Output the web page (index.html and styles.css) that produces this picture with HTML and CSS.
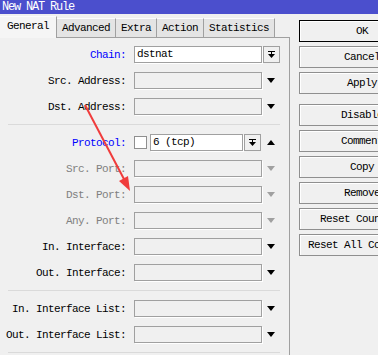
FILE: index.html
```html
<!DOCTYPE html>
<html lang="en">
<head>
    <meta charset="UTF-8">
    <title>New NAT Rule</title>
    <link rel="stylesheet" href="styles.css">
</head>
<body>
    <div class="titlebar">New NAT Rule</div>

    <div class="window">
        <div class="left">
            <div class="tabs">
                <div class="tab selected">General</div>
                <div class="tab">Advanced</div>
                <div class="tab">Extra</div>
                <div class="tab">Action</div>
                <div class="tab">Statistics</div>
            </div>

            <div class="panel">
                <div class="row">
                    <label class="label blue">Chain:</label>
                    <div class="field white chain">dstnat</div>
                    <div class="combo-btn">
                        <svg width="7" height="8" viewBox="0 0 7 8"><rect x="0" y="0" width="7" height="1" fill="#000"/><rect x="3" y="1" width="1" height="3" fill="#000"/><polygon points="0,3 7,3 3.5,7" fill="#000"/></svg>
                    </div>
                </div>
                <div class="row">
                    <label class="label">Src. Address:</label>
                    <div class="field"></div>
                    <div class="arrow down"></div>
                </div>
                <div class="row">
                    <label class="label">Dst. Address:</label>
                    <div class="field"></div>
                    <div class="arrow down"></div>
                </div>

                <div class="separator"></div>

                <div class="row">
                    <label class="label blue">Protocol:</label>
                    <div class="checkbox"></div>
                    <div class="field white proto">6 (tcp)</div>
                    <div class="combo-btn">
                        <svg width="7" height="8" viewBox="0 0 7 8"><rect x="0" y="0" width="7" height="1" fill="#000"/><rect x="3" y="1" width="1" height="3" fill="#000"/><polygon points="0,3 7,3 3.5,7" fill="#000"/></svg>
                    </div>
                    <div class="arrow up"></div>
                </div>
                <div class="row">
                    <label class="label disabled">Src. Port:</label>
                    <div class="field"></div>
                    <div class="arrow down dim"></div>
                </div>
                <div class="row">
                    <label class="label disabled">Dst. Port:</label>
                    <div class="field"></div>
                    <div class="arrow down dim"></div>
                </div>
                <div class="row">
                    <label class="label disabled">Any. Port:</label>
                    <div class="field"></div>
                    <div class="arrow down dim"></div>
                </div>
                <div class="row">
                    <label class="label">In. Interface:</label>
                    <div class="field"></div>
                    <div class="arrow down"></div>
                </div>
                <div class="row">
                    <label class="label">Out. Interface:</label>
                    <div class="field"></div>
                    <div class="arrow down"></div>
                </div>

                <div class="separator"></div>

                <div class="row">
                    <label class="label">In. Interface List:</label>
                    <div class="field"></div>
                    <div class="arrow down"></div>
                </div>
                <div class="row">
                    <label class="label">Out. Interface List:</label>
                    <div class="field"></div>
                    <div class="arrow down"></div>
                </div>

                <div class="separator"></div>
            </div>
        </div>

        <div class="buttons">
            <button class="default">OK</button>
            <button>Cancel</button>
            <button>Apply</button>
            <button class="spaced">Disable</button>
            <button>Comment</button>
            <button>Copy</button>
            <button>Remove</button>
            <button>Reset Counters</button>
            <button>Reset All Counters</button>
        </div>
    </div>

    <!-- annotation arrow drawn over the form -->
    <svg class="annotation" width="378" height="355" viewBox="0 0 378 355">
        <line x1="85" y1="105" x2="125" y2="181" stroke="#f03c3c" stroke-width="2"/>
        <polygon points="130,191 119,181 128,176" fill="#f03c3c"/>
    </svg>
</body>
</html>
```

FILE: styles.css
```css
body {
    margin: 0;
    padding: 0;
    width: 378px;
    height: 355px;
    overflow: hidden;
    background-color: #f0f0f0;
    font-family: "Liberation Mono", monospace;
    font-size: 11px;
    letter-spacing: -0.6px;
    color: #000;
    position: relative;
}

.titlebar {
    height: 14px;
    line-height: 14px;
    padding-left: 2px;
    font-size: 12px;
    letter-spacing: -1.2px;
    background-color: #4b4fcd;
    color: #fff;
}

.window {
    display: flex;
}

.left {
    width: 290px;
    flex-shrink: 0;
}

.tabs {
    display: flex;
    align-items: flex-end;
    height: 23px;
}

.tab {
    height: 19px;
    line-height: 19px;
    padding: 0 5px;
    background-color: #e4e4e4;
    border-top: 1px solid #fcfcfc;
    border-right: 1px solid #a0a0a0;
    box-sizing: border-box;
}

.tab.selected {
    height: 22px;
    line-height: 18px;
    padding: 0 7px;
    background-color: #f5f5f5;
    margin-bottom: -1px;
    position: relative;
}

.panel {
    border-top: 1px solid #a0a0a0;
    border-right: 1px solid #a0a0a0;
    box-sizing: border-box;
    height: 318px;
    padding-top: 8px;
    display: flex;
    flex-direction: column;
    gap: 9px;
}

.row {
    display: flex;
    align-items: center;
    height: 17px;
}

.label {
    width: 126px;
    margin-right: 8px;
    text-align: right;
    white-space: nowrap;
}

.label.blue {
    color: #0000ff;
}

.label.disabled {
    color: #808080;
}

.field {
    width: 128px;
    height: 17px;
    box-sizing: border-box;
    border: 1px solid #a0a0a0;
    box-shadow: 1px 1px 0 #fff;
    padding-left: 2px;
    line-height: 15px;
}

.field.white {
    background-color: #fff;
}

.field.proto {
    width: 93px;
}

.checkbox {
    width: 13px;
    height: 13px;
    box-sizing: border-box;
    border: 1px solid #8f8f8f;
    background-color: #fff;
    margin-right: 3px;
}

.combo-btn {
    width: 17px;
    height: 17px;
    box-sizing: border-box;
    border: 1px solid #a0a0a0;
    background-color: #f0f0f0;
    display: flex;
    align-items: center;
    justify-content: center;
    margin-left: 1px;
}

.arrow {
    width: 0;
    height: 0;
    margin-left: 5px;
    border-left: 4.5px solid transparent;
    border-right: 4.5px solid transparent;
}

.row .combo-btn + .arrow {
    margin-left: 6px;
}

.arrow.down {
    border-top: 5px solid #000;
}

.arrow.up {
    border-bottom: 5px solid #000;
}

.arrow.down.dim {
    border-top-color: #a0a0a0;
}

.separator {
    height: 1px;
    margin-left: 8px;
    width: 272px;
    background-color: #dadada;
}

.buttons {
    margin-left: 9px;
    padding-top: 6px;
    display: flex;
    flex-direction: column;
    gap: 4px;
}

.buttons button {
    width: 126px;
    height: 22px;
    flex-shrink: 0;
    padding: 0;
    font-family: "Liberation Mono", monospace;
    font-size: 11px;
    letter-spacing: -0.6px;
    color: #000;
    background-color: #f0f0f0;
    border: 1px solid #8f8f8f;
    box-shadow: inset 1px 1px 0 #fff;
    white-space: nowrap;
    overflow: hidden;
    text-align: center;
}

.buttons button.default {
    border-color: #000;
}

.buttons button.spaced {
    margin-top: 6px;
}

.annotation {
    position: absolute;
    top: 0;
    left: 0;
    pointer-events: none;
}
```
